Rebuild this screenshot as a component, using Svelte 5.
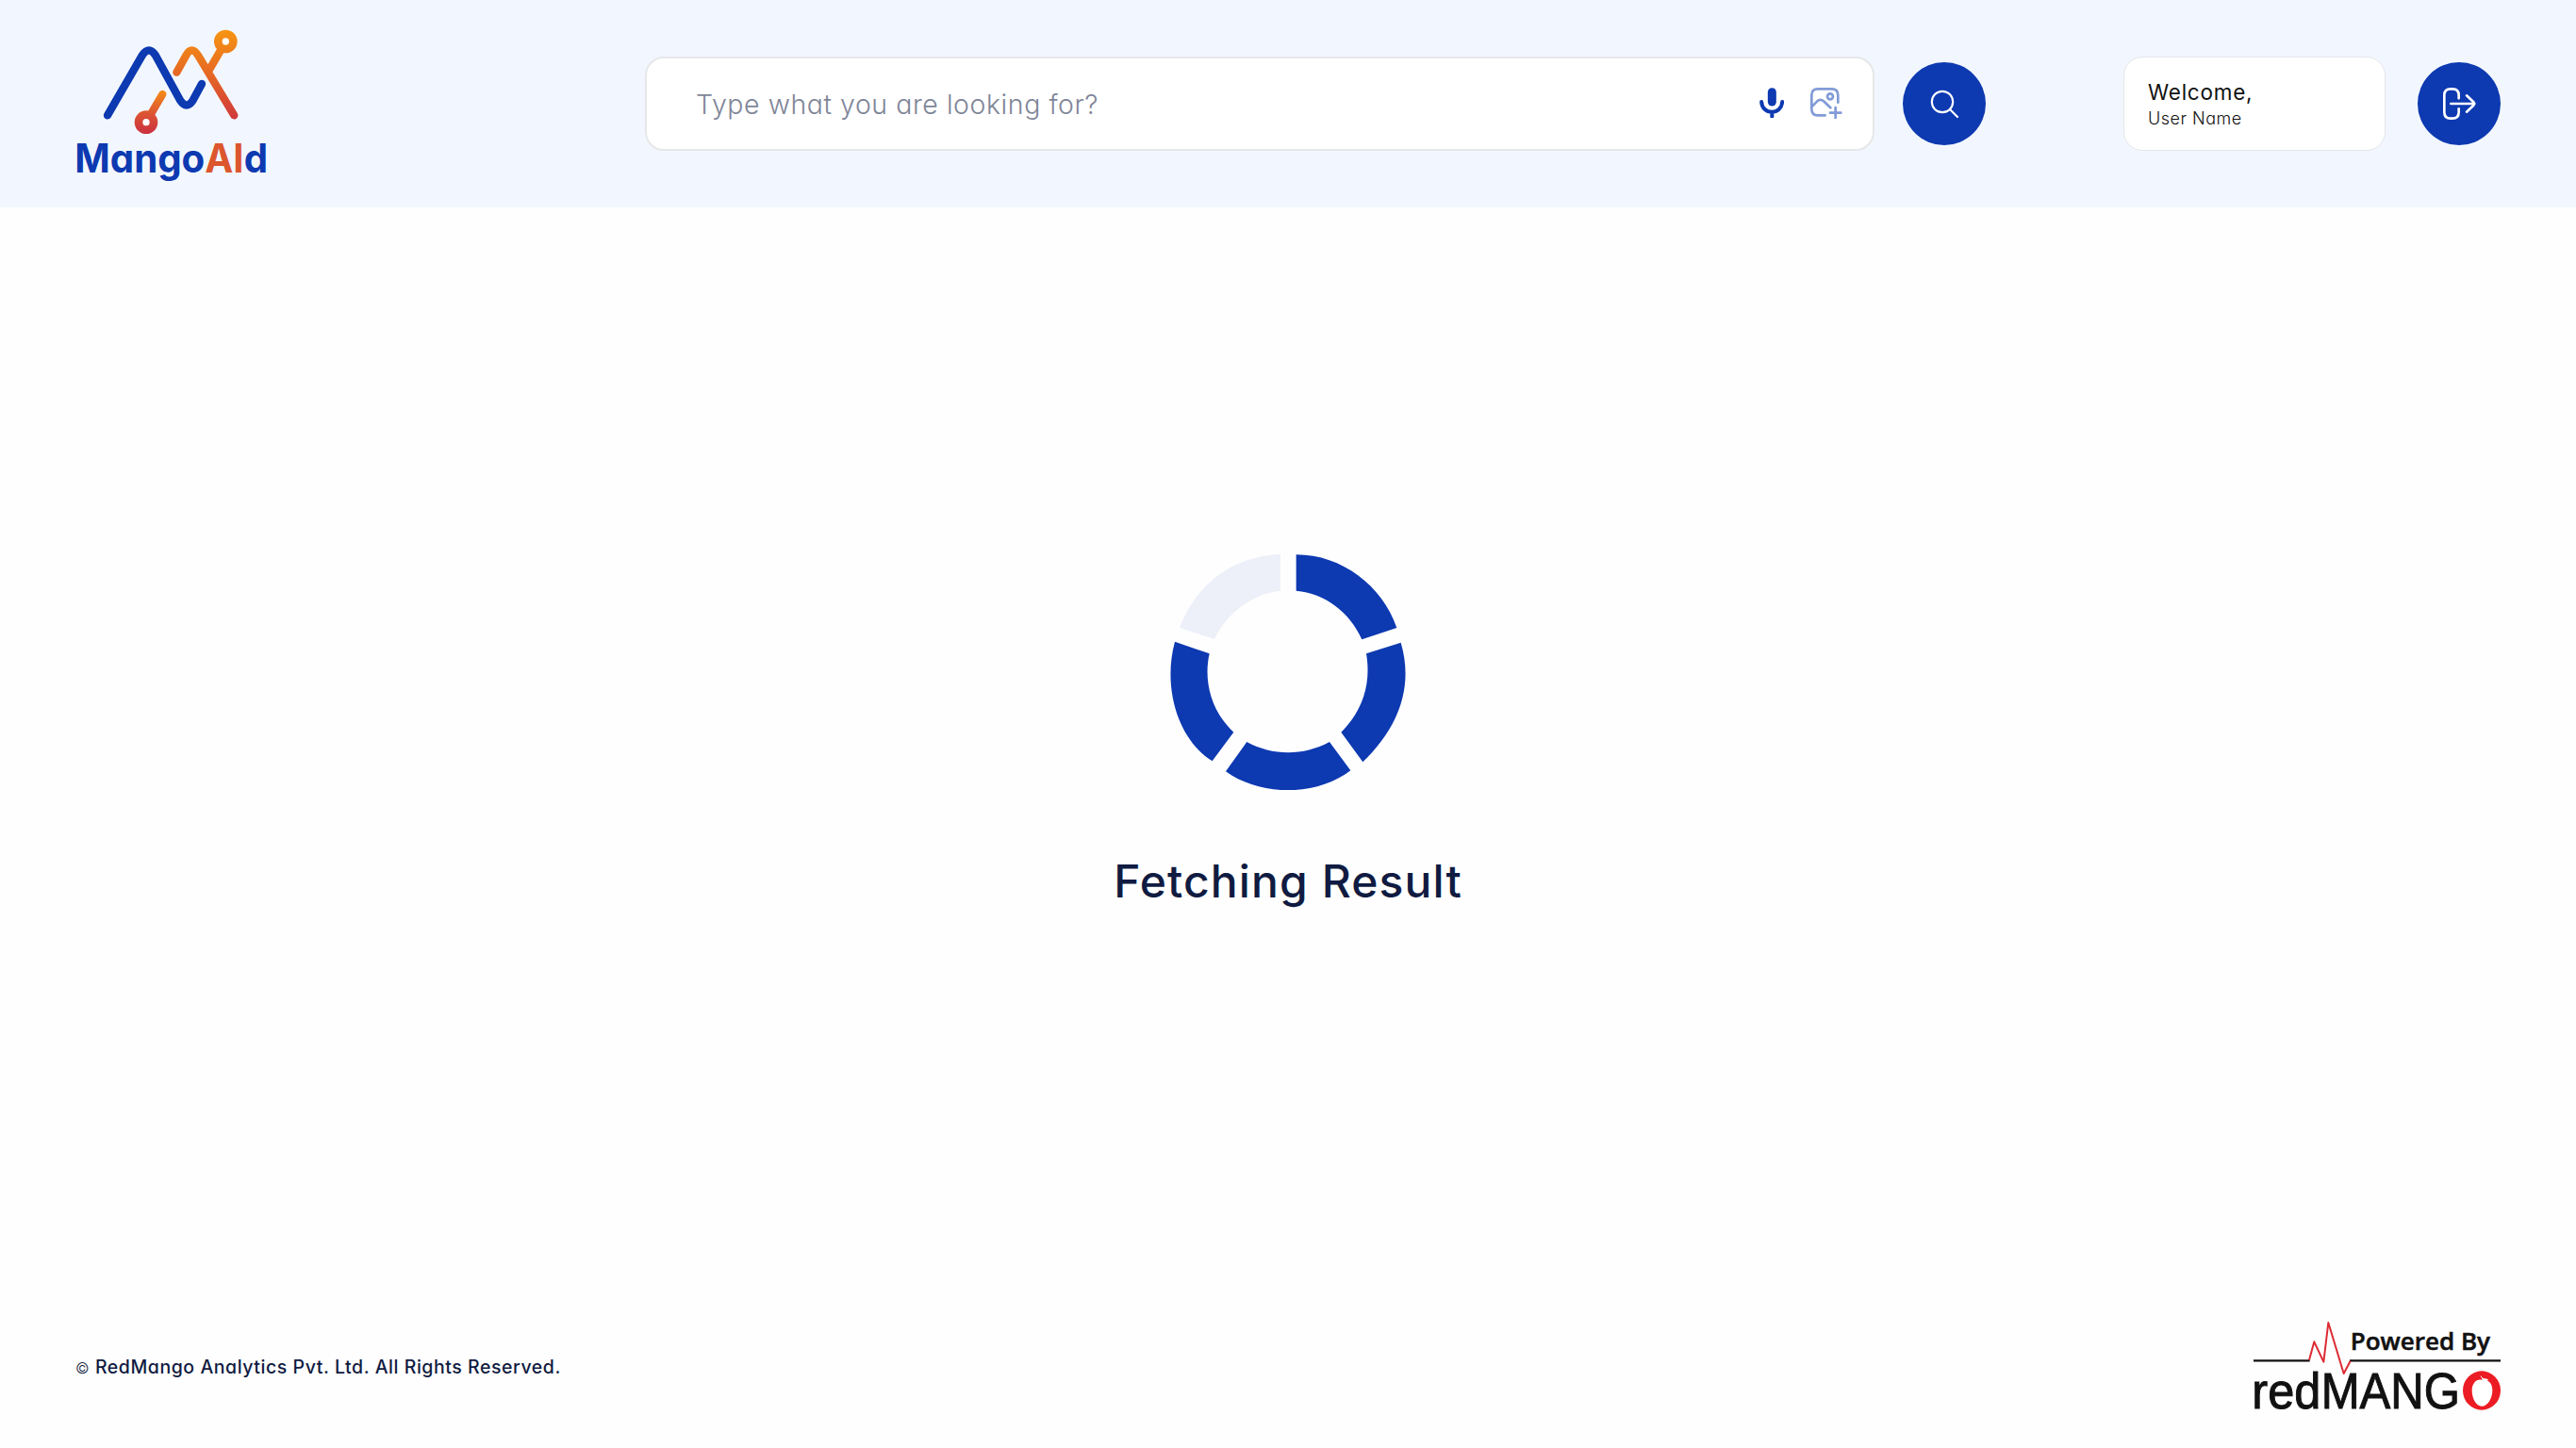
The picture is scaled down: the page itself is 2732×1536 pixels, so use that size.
<script>
  const segments = [
    { d: 'M644 85C790 85 918 185 964 318L853 355C815 268 735 208 644 200Z', done: true },
    { d: 'M977 365C1020 510 965 640 856 745L787 650C853 585 884 500 867 400Z', done: true },
    { d: 'M487 681C570 726 666 726 750 681L817 772C710 855 530 855 420 775Z', done: true },
    { d: 'M258 362C220 500 262 670 377 742L445 650C375 585 348 490 368 400Z', done: true },
    { d: 'M594 84C450 88 325 175 273 318L384 354C424 270 504 210 594 200Z', done: false }
  ];
</script>

<div class="page">
  <header>
    <svg class="logo" viewBox="60 60 612 490" role="img" aria-label="MangoAId">
      <defs>
        <linearGradient id="warm" gradientUnits="userSpaceOnUse" x1="0" y1="66" x2="0" y2="350">
          <stop offset="0" stop-color="#f79412" />
          <stop offset=".5" stop-color="#e56824" />
          <stop offset="1" stop-color="#cf373c" />
        </linearGradient>
        <linearGradient id="warmLow" gradientUnits="userSpaceOnUse" x1="0" y1="258" x2="0" y2="396">
          <stop offset="0" stop-color="#f58d17" />
          <stop offset=".5" stop-color="#dd5731" />
          <stop offset="1" stop-color="#ca3040" />
        </linearGradient>
      </defs>
      <g fill="none" stroke-width="25" stroke-linecap="round" stroke-linejoin="round">
        <g stroke="url(#warm)">
          <path d="M382 200L412 146Q430 114 450 146L565 337M487 190L525 125" />
          <circle cx="538" cy="102" r="24" stroke-width="26" fill="#fff" />
        </g>
        <g stroke="url(#warmLow)">
          <path d="M337 270L300 333" />
          <circle cx="285" cy="359" r="24" stroke-width="26" fill="#fff" />
        </g>
        <path stroke="#0d39b1" d="M162 337L273 145Q294 115 314 145L393 289Q413 320 434 289L462 237" />
      </g>
      <text class="wordmark" x="58" y="519" textLength="614" lengthAdjust="spacingAndGlyphs">Mango<tspan class="accent">AI</tspan>d</text>
    </svg>

    <div class="search">
      <span class="placeholder">Type what you are looking for?</span>
      <svg class="mic" viewBox="137 128 79 98" fill="none" stroke="#0d39b1" stroke-linecap="round">
        <path stroke-width="27" d="M177 142V173" />
        <path stroke-width="12" d="M143.500 173C145 216 208 216 209.500 173M177 207V220" />
      </svg>
      <svg class="image" viewBox="300 128 101 101" fill="none" stroke="#829bd7" stroke-width="8" stroke-linecap="round" stroke-linejoin="round">
        <path d="M388 175V152Q388 132 368 132H324Q304 132 304 152V196Q304 216 324 216H347M304 189L322 171Q332 162 342 171L364 192M380 191V225M363 208H397" />
        <circle cx="363" cy="156" r="9" />
      </svg>
    </div>

    <button class="round find" aria-label="Search">
      <svg viewBox="594 48 264 264" fill="none" stroke="#fff" stroke-width="6.500" stroke-linecap="round">
        <circle cx="720" cy="174" r="33.500" />
        <path d="M744 198L768 222" />
      </svg>
    </button>

    <div class="user">
      <span class="hello">Welcome,</span>
      <span class="name">User Name</span>
    </div>

    <button class="round" aria-label="Log out">
      <svg viewBox="1002 78 264 264" fill="none" stroke="#fff" stroke-width="8" stroke-linecap="round" stroke-linejoin="round">
        <path d="M1133 193V183Q1133 163 1113 163H1107Q1087 163 1087 183V237Q1087 257 1107 257H1113Q1133 257 1133 237V226M1108 210H1183M1158 184L1180 205Q1184 210 1180 215L1158 236" />
      </svg>
    </button>
  </header>

  <main>
    <svg class="loader" viewBox="243 84 750 750" aria-hidden="true">
      {#each segments as s}
        <path d={s.d} class:done={s.done} />
      {/each}
    </svg>
    <p class="status">Fetching Result</p>
  </main>

  <footer>
    <span class="copy"><span class="mark">©</span> RedMango Analytics Pvt. Ltd. All Rights Reserved.</span>
    <svg class="brand" viewBox="60 60 786 300" role="img" aria-label="Powered By redMANGO">
      <path d="M60 190H239M366 190H846" stroke="#111" stroke-width="7" />
      <path d="M237 188L253 130L283 194L298 69L347 231L368 191" fill="none" stroke="#dc2b34" stroke-width="6" stroke-linejoin="round" />
      <text class="powered" x="368" y="155" textLength="445" lengthAdjust="spacingAndGlyphs">Powered By</text>
      <text class="red" x="55" y="342" textLength="219" lengthAdjust="spacingAndGlyphs">red</text>
      <text class="red" x="275" y="342" textLength="442" lengthAdjust="spacingAndGlyphs">MANG</text>
      <ellipse cx="786" cy="285" rx="60" ry="62" fill="#ec1c24" />
      <path d="M786 251C768 248 755 263 755 285C755 310 768 335 786 335C805 335 820 310 820 284C820 262 807 249 786 251Z" fill="#fff" />
      <path d="M783 239C789 251 797 246 806 251C800 253 795 251 790 254" fill="#fff" stroke="#fff" stroke-width="3" />
    </svg>
  </footer>
</div>

<style>
  :global(body) {
    background: #fefefe;
  }
  .page {
    box-sizing: border-box;
    width: 2732px;
    height: 1536px;
    display: flex;
    flex-direction: column;
    font-family: Inter, sans-serif;
    font-feature-settings: 'cv11';
    color: #101b41;
  }
  header {
    box-sizing: border-box;
    height: 220px;
    padding: 0 80px 0 80px;
    display: flex;
    align-items: center;
    background: #f2f7ff;
  }
  .logo {
    width: 204px;
    height: 163.333px;
    margin: 4px 400px 0 0;
    overflow: visible;
  }
  .wordmark {
    font-size: 126px;
    font-weight: 700;
    fill: #0d39b1;
  }
  .accent {
    fill: #dc562e;
  }
  .search {
    box-sizing: border-box;
    width: 1304px;
    height: 100px;
    padding: 0 32px 0 52px;
    display: flex;
    align-items: center;
    background: #fff;
    border: 2px solid #e6e7e9;
    border-radius: 20px;
  }
  .placeholder {
    flex: 1;
    font-size: 28.5px;
    font-weight: 300;
    letter-spacing: 0.55px;
    white-space: nowrap;
    color: #7f8698;
  }
  .mic {
    width: 26.333px;
    height: 32.667px;
    margin: 0 28px 2px 0;
  }
  .image {
    width: 33.667px;
    height: 33.667px;
    margin-bottom: 1px;
  }
  .round {
    width: 88px;
    height: 88px;
    padding: 0;
    border: 0;
    border-radius: 50%;
    background: #0d39b1;
    flex: none;
  }
  .round svg {
    display: block;
    width: 88px;
    height: 88px;
  }
  .find {
    margin: 0 146px 0 30px;
  }
  .user {
    box-sizing: border-box;
    width: 278px;
    height: 100px;
    padding: 0 25px;
    margin-right: 34px;
    display: flex;
    flex-direction: column;
    justify-content: center;
    background: #fff;
    border: 1px solid #e4e6e9;
    border-radius: 20px;
    color: #111;
    white-space: nowrap;
  }
  .hello {
    font-size: 22.5px;
    line-height: 30px;
    letter-spacing: 0.75px;
  }
  .name {
    font-size: 18px;
    line-height: 25px;
    font-weight: 300;
    letter-spacing: 0.5px;
  }
  main {
    flex: 1;
    display: flex;
    flex-direction: column;
    align-items: center;
    padding-top: 368px;
  }
  .loader {
    width: 250px;
    height: 250px;
  }
  .loader path {
    fill: #edf0f9;
  }
  .loader path.done {
    fill: #0d39b1;
  }
  .status {
    margin: 63px 0 0;
    font-size: 48px;
    line-height: 68px;
    font-weight: 500;
    letter-spacing: 1.1px;
    white-space: nowrap;
  }
  footer {
    box-sizing: border-box;
    height: 136px;
    padding: 0 80px;
    display: flex;
    justify-content: space-between;
    align-items: flex-start;
  }
  .copy {
    margin-top: 35px;
    font-size: 19.5px;
    line-height: 30px;
    font-weight: 500;
    letter-spacing: 0.55px;
    white-space: nowrap;
  }
  .mark {
    font-size: 16px;
    font-weight: 300;
  }
  .brand {
    width: 262px;
    height: 100px;
    overflow: visible;
  }
  .powered {
    font-family: 'Open Sans', sans-serif;
    font-size: 73px;
    font-weight: 600;
    fill: #111;
    stroke: #111;
    stroke-width: 1.5px;
  }
  .red {
    font-family: 'Liberation Sans', sans-serif;
    font-size: 161px;
    fill: #111;
    stroke: #111;
    stroke-width: 3px;
  }
</style>
